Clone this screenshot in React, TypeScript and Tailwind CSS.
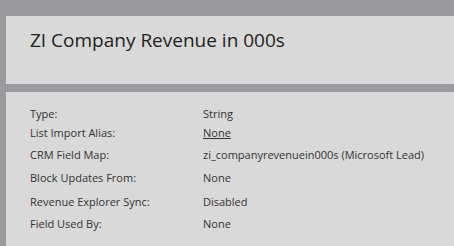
const ROWS = [
  { label: 'Type:', value: 'String', h: 'h-[19px]' },
  { label: 'List Import Alias:', value: 'None', link: true, h: 'h-[22px]' },
  { label: 'CRM Field Map:', value: 'zi_companyrevenuein000s (Microsoft Lead)', h: 'h-[23px]' },
  { label: 'Block Updates From:', value: 'None', h: 'h-[24px]' },
  { label: 'Revenue Explorer Sync:', value: 'Disabled', h: 'h-[22px]' },
  { label: 'Field Used By:', value: 'None', h: 'h-[22px]' },
]

export default function App() {
  return (
    <div className="w-[454px] h-[246px] overflow-hidden bg-[#9b9a9f] pl-[6px] pt-[16px] font-['Open_Sans',sans-serif]">
      {/* Header */}
      <div className="h-[68px] bg-[#d9d9d9] pl-[24px] pt-[11px]">
        <h1 className="text-[19px] leading-[26px] text-[#222]">ZI Company Revenue in 000s</h1>
      </div>

      {/* Details */}
      <div className="mt-[8px] h-[200px] bg-[#d9d9d9] pl-[24px] pt-[14px]">
        {ROWS.map(row => (
          <div key={row.label} className={`flex ${row.h} text-[11px] leading-[15px] text-[#333]`}>
            <span className="w-[173px] shrink-0">{row.label}</span>
            <span className={row.link ? 'underline text-[#333]' : ''}>{row.value}</span>
          </div>
        ))}
      </div>
    </div>
  )
}
